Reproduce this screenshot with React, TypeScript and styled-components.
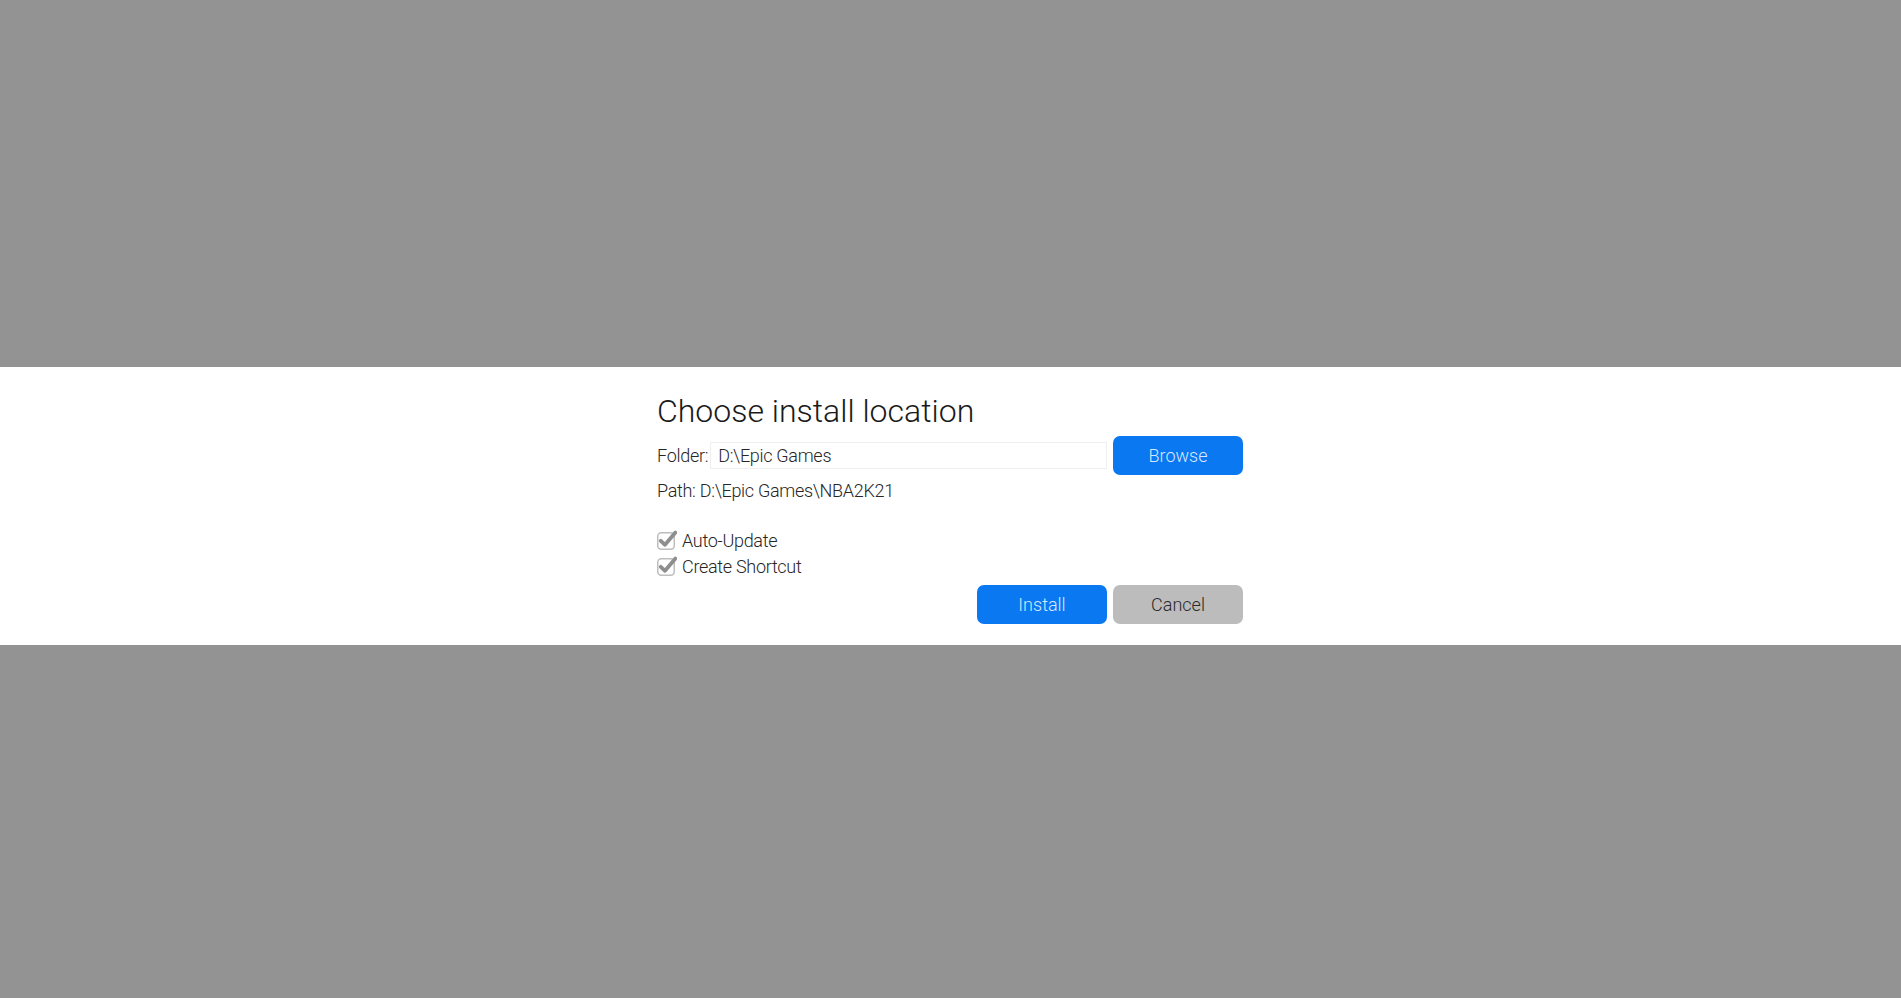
import React, { useState } from "react";
import styled, { createGlobalStyle } from "styled-components";

const GlobalStyle = createGlobalStyle`
  html, body {
    margin: 0;
    padding: 0;
    background: #939393;
    font-family: Roboto, "Liberation Sans", sans-serif;
  }
`;

function CheckIcon() {
  return (
    <svg width="20" height="20" viewBox="0 0 20 20">
      <rect x="0.75" y="2.75" width="16.5" height="16.5" rx="3.5" fill="#fff" stroke="#bdbdbd" strokeWidth="1.5" />
      <path d="M3.8 10.8 L8 14.8 L18.4 2.6" fill="none" stroke="#8e8e8e" strokeWidth="3.8" strokeLinecap="round" strokeLinejoin="round" />
    </svg>
  );
}

export default function App() {
  const [folder, setFolder] = useState("D:\\Epic Games");
  const [autoUpdate, setAutoUpdate] = useState(true);
  const [shortcut, setShortcut] = useState(true);

  return (
    <>
      <GlobalStyle />
      <StPage>
        <StBand>
          <StColumn>
            <StTitle>Choose install location</StTitle>
            <StFolderRow>
              <StLabel>Folder:</StLabel>
              <StInput value={folder} onChange={(e) => setFolder(e.target.value)} />
              <StButton $variant="primary">Browse</StButton>
            </StFolderRow>
            <StPath>Path: {folder}\NBA2K21</StPath>
            <StChecks>
              <StCheckRow onClick={() => setAutoUpdate(!autoUpdate)}>
                {autoUpdate ? <CheckIcon /> : <StEmptyBox />}
                Auto-Update
              </StCheckRow>
              <StCheckRow onClick={() => setShortcut(!shortcut)}>
                {shortcut ? <CheckIcon /> : <StEmptyBox />}
                Create Shortcut
              </StCheckRow>
            </StChecks>
            <StActions>
              <StButton $variant="primary">Install</StButton>
              <StButton $variant="secondary">Cancel</StButton>
            </StActions>
          </StColumn>
        </StBand>
      </StPage>
    </>
  );
}

const StPage = styled.div`
  min-height: 998px;
  padding-top: 367px;
  box-sizing: border-box;
`;

const StBand = styled.div`
  background: #fff;
  height: 278px;
  box-sizing: border-box;
  padding: 25px 0 0 657px;
`;

const StColumn = styled.div`
  width: 586px;
  display: flex;
  flex-direction: column;
  color: #262626;
`;

const StTitle = styled.h1`
  margin: 0;
  font-size: 32px;
  line-height: 38px;
  font-weight: 300;
  color: #1a1a1a;
`;

const StFolderRow = styled.div`
  display: flex;
  align-items: center;
  gap: 6px;
  margin-top: 6px;
  height: 39px;
`;

const StLabel = styled.span`
  font-size: 18px;
  font-weight: 300;
  letter-spacing: -0.3px;
  margin-right: -4px;
`;

const StInput = styled.input`
  flex: 1;
  min-width: 0;
  height: 27px;
  box-sizing: border-box;
  border: 1px solid #efefef;
  padding: 0 7px;
  font-family: inherit;
  font-size: 18px;
  font-weight: 300;
  letter-spacing: -0.3px;
  color: #262626;
  outline: none;
`;

const StButton = styled.button<{ $variant: "primary" | "secondary" }>`
  width: 130px;
  height: 39px;
  border: none;
  border-radius: 7px;
  font-family: inherit;
  font-size: 18px;
  font-weight: 300;
  cursor: pointer;
  background: ${(p) => (p.$variant === "primary" ? "#0a78f0" : "#bcbcbc")};
  color: ${(p) => (p.$variant === "primary" ? "#d6e7ff" : "#2a2a2a")};
`;

const StPath = styled.div`
  margin-top: 4px;
  font-size: 18px;
  line-height: 24px;
  font-weight: 300;
  letter-spacing: -0.3px;
`;

const StChecks = styled.div`
  display: flex;
  flex-direction: column;
  margin-top: 24px;
`;

const StCheckRow = styled.label`
  display: flex;
  align-items: center;
  gap: 5px;
  height: 26px;
  font-size: 18px;
  font-weight: 300;
  letter-spacing: -0.3px;
  cursor: pointer;
  user-select: none;
`;

const StEmptyBox = styled.span`
  width: 17px;
  height: 17px;
  margin: 3px 3px 0 0;
  border: 1.5px solid #bdbdbd;
  border-radius: 3.5px;
  box-sizing: border-box;
`;

const StActions = styled.div`
  display: flex;
  justify-content: flex-end;
  gap: 6px;
  margin-top: 6px;
`;
